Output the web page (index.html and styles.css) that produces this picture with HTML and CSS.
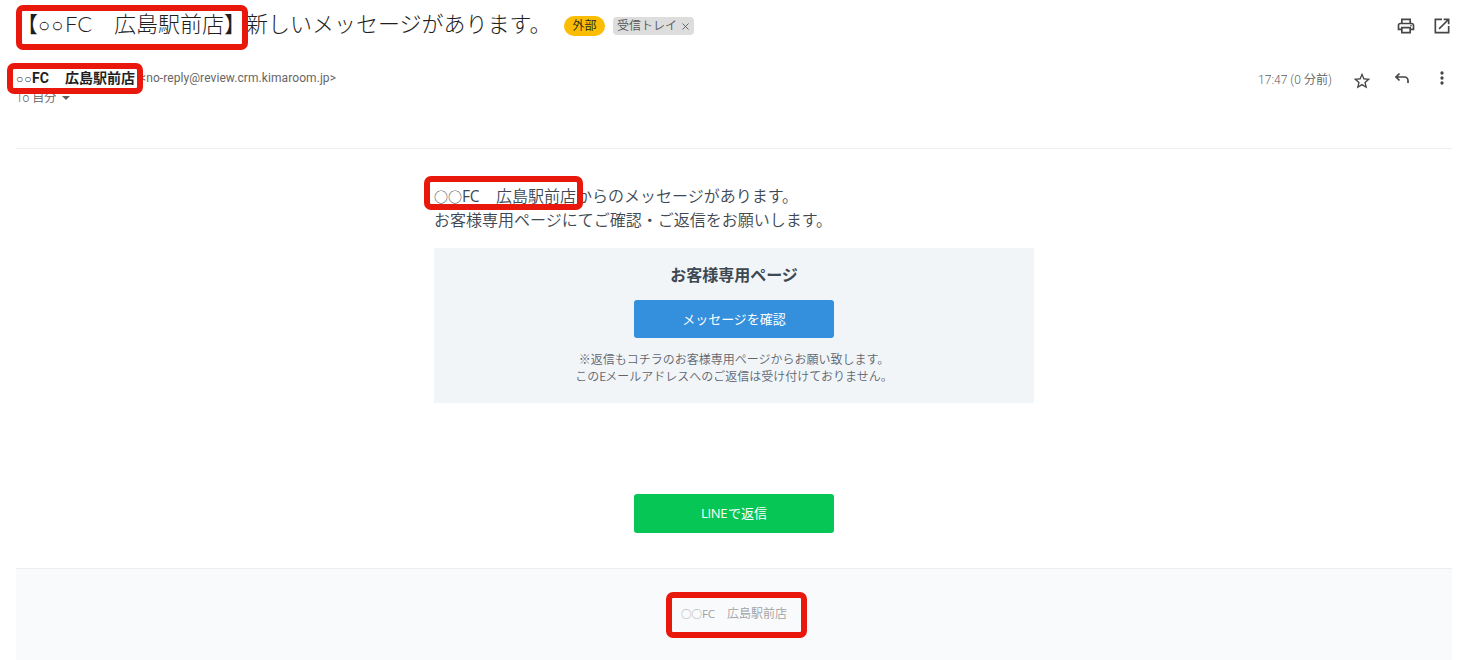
FILE: index.html
```html
<!DOCTYPE html>
<html lang="ja">
<head>
  <meta charset="UTF-8">
  <title>新しいメッセージがあります。</title>
  <link rel="stylesheet" href="styles.css">
</head>
<body>
  <header class="subject">
    <h1>【<span class="circle">○○</span><span class="latin">FC</span>　広島駅前店】新しいメッセージがあります。</h1>
    <span class="tag external">外部</span>
    <span class="tag inbox">受信トレイ <svg width="7" height="7" viewBox="0 0 7 7"><path d="M.5 .5l6 6M6.5 .5l-6 6"/></svg></span>
    <div class="tools">
      <svg width="20" height="20" viewBox="0 0 24 24"><path d="M19 8h-1V3H6v5H5c-1.660 0-3 1.340-3 3v6h4v4h12v-4h4v-6c0-1.660-1.340-3-3-3zM8 5h8v3H8V5zm8 12v2H8v-4h8v2zm2-2v-2H6v2H4v-4c0-.55.45-1 1-1h14c.55 0 1 .45 1 1v4h-2z"/><circle cx="18" cy="11.500" r="1"/></svg>
      <svg width="20" height="20" viewBox="0 0 24 24"><path d="M19 19H5V5h7V3H3v18h18v-9h-2v7zM14 3v2h3.590l-9.830 9.830 1.410 1.410L19 6.410V10h2V3h-7z"/></svg>
    </div>
  </header>

  <section class="sender">
    <div class="from">
      <div class="line"><strong><span class="circle">○○</span><span class="latin">FC</span>　広島駅前店</strong><span class="email">&lt;no-reply@review.crm.kimaroom.jp&gt;</span></div>
      <div class="to">To 自分 <i class="caret"></i></div>
    </div>
    <span class="date">17:47 (0 分前)</span>
    <svg class="star" width="20" height="20" viewBox="0 0 24 24"><path d="M22 9.240l-7.190-.62L12 2 9.190 8.630 2 9.240l5.460 4.730L5.820 21 12 17.270 18.180 21l-1.630-7.030L22 9.240zM12 15.400l-3.760 2.270 1-4.280-3.320-2.880 4.380-.38L12 6.100l1.710 4.040 4.380.38-3.320 2.880 1 4.280L12 15.400z"/></svg>
    <svg class="reply" width="16" height="14" viewBox="0 0 16 14"><path d="M5.500 1.500L2 5l3.500 3.500M2 5h8.500a3.500 3.500 0 0 1 3.500 3.500V11"/></svg>
    <svg class="more" width="20" height="20" viewBox="0 0 24 24"><circle cx="12" cy="6" r="2"/><circle cx="12" cy="12" r="2"/><circle cx="12" cy="18" r="2"/></svg>
  </section>

  <main class="mail">
    <p class="intro"><span class="circle">○○</span><span class="latin">FC</span>　広島駅前店からのメッセージがあります。<br>お客様専用ページにてご確認・ご返信をお願いします。</p>
    <div class="panel">
      <h2>お客様専用ページ</h2>
      <a class="button blue">メッセージを確認</a>
      <p>※返信もコチラのお客様専用ページからお願い致します。<br>この<span class="latin">E</span>メールアドレスへのご返信は受け付けておりません。</p>
    </div>
    <a class="button green"><span class="latin">LINE</span>で返信</a>
  </main>

  <footer class="footer"><span class="circle">○○</span><span class="latin">FC</span>　広島駅前店</footer>

  <div class="mark mark-subject"></div>
  <div class="mark mark-sender"></div>
  <div class="mark mark-intro"></div>
  <div class="mark mark-footer"></div>
</body>
</html>
```
FILE: styles.css
```css
* { box-sizing: border-box; }
body {
  margin: 0;
  height: 660px;
  padding: 0 7px 0 16px;
  overflow: hidden;
  position: relative;
  background: #fff;
  color: #1f1f1f;
  font-family: "Noto Sans CJK JP", sans-serif;
  font-weight: 350;
}
h1, h2, p { margin: 0; }
svg { fill: #444746; flex: none; }
.circle, .latin { display: inline-block; white-space: nowrap; line-height: 1; }

.subject { display: flex; align-items: center; height: 52px; }
h1 { font-size: 22px; font-weight: 300; line-height: 30px; width: 548px; white-space: nowrap; margin-top: -8px; }
h1 .circle { font: 200 20px/22px "DejaVu Sans"; width: 27px; letter-spacing: 1.200px; }
h1 .latin { width: 27px; font-family: Lato, sans-serif; font-weight: 300; }
.tag { font-size: 12px; font-weight: 350; line-height: 18px; white-space: nowrap; }
.external { width: 41px; height: 20px; line-height: 18px; border-radius: 10px; background: #fbbc04; text-align: center; }
.inbox { width: 81px; height: 18px; line-height: 16px; margin-left: 8px; padding-left: 4px; border-radius: 4px; background: #ddd; color: #555; }
.inbox svg { stroke: #666; fill: none; margin-left: 2px; }
.tools { display: flex; gap: 16px; margin-left: auto; }

.sender { display: flex; align-items: flex-start; height: 97px; padding-top: 15px; border-bottom: 1px solid #eceff1; }
.from { flex: 1; }
.line { display: flex; height: 22px; line-height: 20px; }
.line strong { width: 124px; font-size: 14px; font-weight: 700; white-space: nowrap; }
.line .circle { width: 16px; font: 200 12px/12px "DejaVu Sans"; letter-spacing: .9px; }
.line .latin { width: 19px; font-family: Roboto, sans-serif; }
.email { color: #666; font: 400 12px/22px Roboto, sans-serif; letter-spacing: .08px; }
.to { height: 18px; color: #5e5e5e; font: 350 12px/18px Roboto, "Noto Sans CJK JP", sans-serif; }
.caret { display: inline-block; margin-left: 3px; border: 4px solid transparent; border-top-color: #5e5e5e; border-bottom: 0; vertical-align: 2px; }
.date { color: #5e5e5e; font: 350 12px/20px Roboto, "Noto Sans CJK JP", sans-serif; width: 74px; margin: 3px 20px 0 0; white-space: nowrap; letter-spacing: .05px; }
.star { margin-top: 4px; }
.reply { margin: 5px 22px 0; stroke: #444746; stroke-width: 1.700; fill: none; }
.more { margin-top: 1px; }

.mail { width: 600px; height: 419px; margin-left: 418px; padding-top: 34px; color: #3d4852; }
.intro { font-size: 16px; line-height: 24px; height: 48px; white-space: nowrap; }
.intro .circle { width: 28px; font-size: 14px; }
.intro .latin { width: 18px; font-family: "Open Sans"; font-size: 15.500px; font-weight: 400; letter-spacing: -.2px; }
.panel { height: 155px; margin: 17px 0 91px; padding-top: 14px; background: #f1f5f8; text-align: center; }
.panel h2 { font-size: 16px; font-weight: 700; line-height: 24px; margin-bottom: 14px; }
.button { display: block; width: 200px; height: 38px; margin: 0 auto; border-radius: 3px; color: #fff; font-size: 13px; font-weight: 400; line-height: 37px; text-align: center; }
.blue { background: #3490dc; }
.green { height: 39px; background: #06c755; }
.green .latin { width: 27px; letter-spacing: -.3px; font-family: "Open Sans"; text-align: left; }
.panel p { margin-top: 12px; color: #606670; font-size: 12px; line-height: 17px; white-space: nowrap; }
.panel .latin { width: 6px; }

.footer { height: 92px; padding-top: 35px; border-top: 1px solid #eceff1; background: #f8fafc; color: #a0a0a0; font-size: 12px; line-height: 18px; text-align: center; }
.footer .circle { width: 21px; font-size: 10.500px; }
.footer .latin { width: 13px; font-family: "Open Sans"; font-size: 11.500px; font-weight: 400; letter-spacing: -.2px; }

/* red highlight frames */
.mark { position: absolute; border: 6px solid #e8190c; border-radius: 7px; }
.mark-subject { left: 16px; top: 5px; width: 232px; height: 45px; }
.mark-sender { left: 7px; top: 63px; width: 136px; height: 31px; }
.mark-intro { left: 424px; top: 176px; width: 159px; height: 34px; }
.mark-footer { left: 666px; top: 592px; width: 141px; height: 46px; }
```
